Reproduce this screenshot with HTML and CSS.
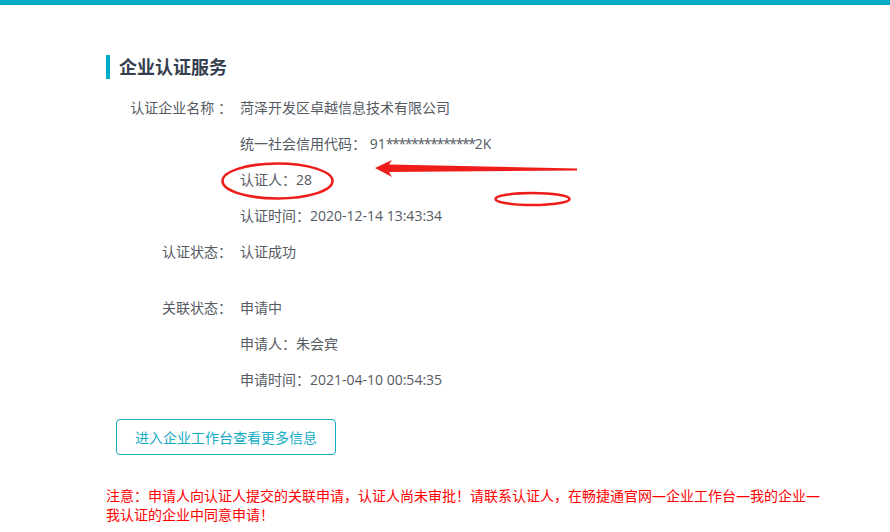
FILE: index.html
```html
<!DOCTYPE html>
<html lang="zh-CN">
<head>
<meta charset="utf-8">
<title>企业认证服务</title>
<link rel="stylesheet" href="styles.css">
</head>
<body>
<div class="topbar"></div>
<main class="page">
  <h2 class="title">企业认证服务</h2>
  <div class="info">
    <div class="row">
      <div class="label">认证企业名称 ：</div>
      <div class="vals">
        <div class="line">菏泽开发区卓越信息技术有限公司</div>
        <div class="line">统一社会信用代码： 91<span class="mask">**************</span>2K</div>
        <div class="line">认证人：28</div>
        <div class="line">认证时间：2020-12-14 13:43:34</div>
      </div>
    </div>
    <div class="row">
      <div class="label">认证状态：</div>
      <div class="vals">
        <div class="line">认证成功</div>
      </div>
    </div>
    <div class="row row-gap">
      <div class="label">关联状态：</div>
      <div class="vals">
        <div class="line">申请中</div>
        <div class="line">申请人：朱会宾</div>
        <div class="line">申请时间：2021-04-10 00:54:35</div>
      </div>
    </div>
  </div>
  <button class="btn" type="button">进入企业工作台查看更多信息</button>
  <p class="notice">注意：申请人向认证人提交的关联申请，认证人尚未审批！请联系认证人，在畅捷通官网—企业工作台—我的企业—我认证的企业中同意申请！</p>
</main>
<svg class="marks" width="890" height="532" viewBox="0 0 890 532" aria-hidden="true">
  <ellipse cx="277.5" cy="181" rx="55" ry="17.5" fill="none" stroke="#ee1d1a" stroke-width="2.6"/>
  <ellipse cx="532.5" cy="199" rx="37" ry="6" fill="none" stroke="#ee1d1a" stroke-width="2.6"/>
  <polygon points="375,168 392,160 389,164.5 577,168.5 577,170.5 389,172 392,177" fill="#ee1d1a"/>
</svg>
</body>
</html>
```
FILE: styles.css
```css
html, body {
  margin: 0;
  padding: 0;
  background: #fff;
}
body {
  width: 890px;
  height: 532px;
  overflow: hidden;
  position: relative;
  font-family: "Open Sans", "Noto Sans CJK SC", sans-serif;
  font-size: 14px;
  color: #555a63;
}
.topbar {
  height: 5px;
  background: #00acc6;
}
.page {
  padding-left: 106px;
}
.title {
  margin: 50px 0 11px;
  height: 24px;
  line-height: 24px;
  border-left: 4px solid #00acc6;
  padding-left: 9px;
  font-size: 18px;
  font-weight: bold;
  color: #343e4e;
}
.info {
  display: flex;
  flex-direction: column;
}
.row {
  display: flex;
}
.row-gap {
  margin-top: 20px;
}
.label {
  width: 126px;
  text-align: right;
  line-height: 36px;
  white-space: pre;
}
.vals {
  margin-left: 8px;
  display: flex;
  flex-direction: column;
}
.line {
  height: 36px;
  line-height: 36px;
  white-space: nowrap;
}
.mask {
  letter-spacing: -1.35px;
}
.btn {
  display: block;
  margin: 21px 0 0 10px;
  width: 220px;
  height: 36px;
  padding: 0;
  border: 1px solid #16abc4;
  border-radius: 4px;
  background: #fff;
  color: #16abc4;
  font-family: "Open Sans", "Noto Sans CJK SC", sans-serif;
  font-size: 14px;
  cursor: pointer;
}
.notice {
  margin: 31px 0 0;
  width: 722px;
  font-size: 14px;
  line-height: 19px;
  color: #ff0000;
}
.marks {
  position: absolute;
  left: 0;
  top: 0;
  pointer-events: none;
}
```
